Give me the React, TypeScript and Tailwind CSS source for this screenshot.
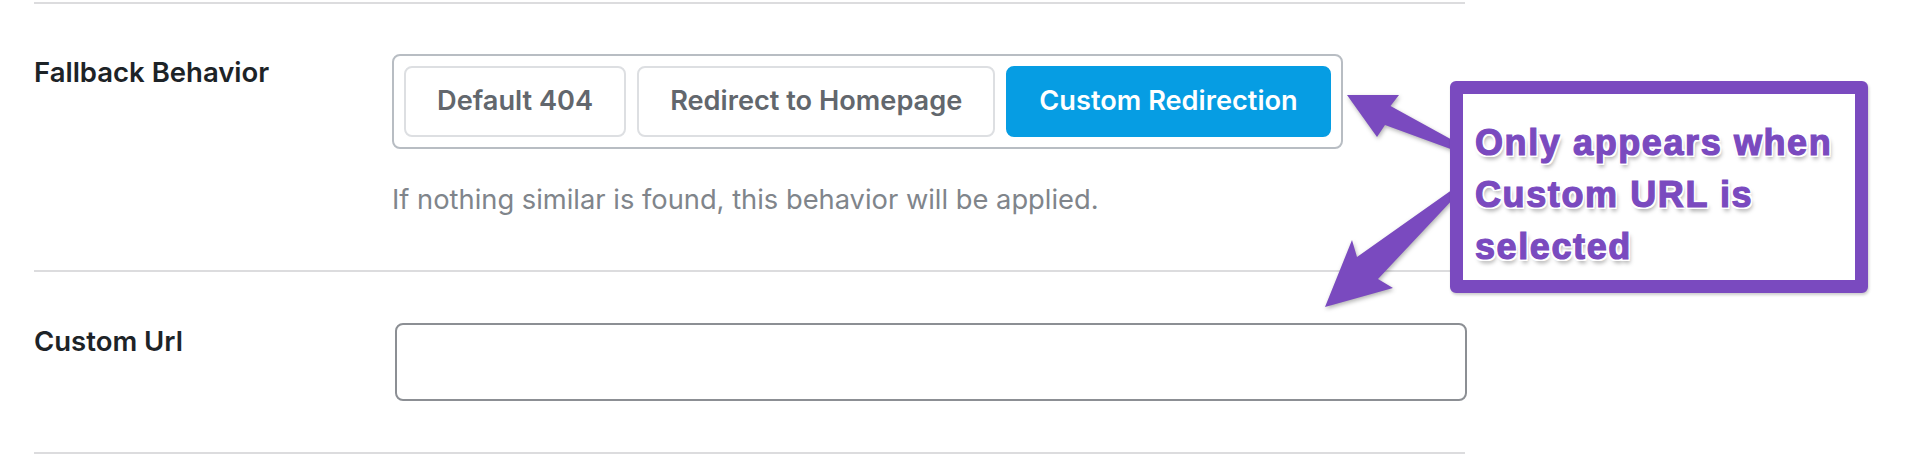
import { useState } from 'react';

const options = ['Default 404', 'Redirect to Homepage', 'Custom Redirection'];

export default function App() {
  const [selected, setSelected] = useState('Custom Redirection');
  const [customUrl, setCustomUrl] = useState('');

  return (
    <div className="relative h-[454px] w-[1910px] overflow-hidden bg-white font-['Inter',sans-serif]">
      <div className="ml-[34px] w-[1431px] pt-[2px]">
        <div className="border-t-2 border-[#dcdcde]" />

        {/* Fallback behavior */}
        <div className="flex border-b-2 border-[#dcdcde] pt-[50px] pb-[50px]">
          <div className="w-[358px] shrink-0 text-[27.5px] leading-[36px] font-semibold text-[#1d2327]">
            Fallback Behavior
          </div>
          <div>
            <div className="inline-flex gap-[11px] rounded-[8px] border-2 border-[#b8bdc3] p-[10px]">
              {options.map((opt) => (
                <button
                  key={opt}
                  onClick={() => setSelected(opt)}
                  className={
                    selected === opt
                      ? 'h-[71px] rounded-[8px] border-2 border-[#069de3] bg-[#069de3] px-[31px] text-[27.2px] font-semibold text-white'
                      : 'h-[71px] rounded-[8px] border-2 border-[#dddfe2] bg-white px-[31px] text-[27.2px] font-semibold text-[#62676d]'
                  }
                >
                  {opt}
                </button>
              ))}
            </div>
            <p className="mt-[31px] text-[27.3px] leading-[40px] text-[#80858b]">
              If nothing similar is found, this behavior will be applied.
            </p>
          </div>
        </div>

        {/* Custom url */}
        <div className="flex border-b-2 border-[#dcdcde] pt-[51px] pb-[51px]">
          <div className="w-[358px] shrink-0 text-[27.5px] leading-[36px] font-semibold text-[#1d2327]">
            Custom Url
          </div>
          <input
            type="text"
            value={customUrl}
            onChange={(e) => setCustomUrl(e.target.value)}
            className="ml-[3px] h-[78px] w-[1072px] shrink-0 rounded-[8px] border-2 border-[#8c8f94] px-4 text-[27px] outline-none"
          />
        </div>
      </div>

      {/* Annotation arrows */}
      <svg
        className="pointer-events-none absolute left-0 top-0 drop-shadow-[1px_2px_2px_rgba(0,0,0,0.3)]"
        width="1910"
        height="454"
        viewBox="0 0 1910 454"
      >
        <polygon
          fill="#7a4abf"
          points="1347,95 1399,95 1390.5,106 1456,142 1456,151 1385,125 1377,137"
        />
        <polygon
          fill="#7a4abf"
          points="1325,307 1352,240 1357,257 1456,187 1456,196 1378,279 1393,288"
        />
      </svg>

      {/* Annotation box */}
      <div className="absolute left-[1450px] top-[81px] h-[212px] w-[418px] rounded-[6px] border-[13px] border-[#7a4abf] bg-white pl-[12px] pt-[23px] shadow-[1px_2px_3px_rgba(0,0,0,0.2)]">
        <div className="font-['Liberation_Sans',Arial,sans-serif] text-[36px] leading-[52px] font-bold tracking-[1.6px] text-[#7a4abf] [-webkit-text-stroke:1.2px_#7a4abf] [text-shadow:2px_0_0_#fff,-2px_0_0_#fff,0_2px_0_#fff,0_-2px_0_#fff,2px_2px_0_#fff,-2px_-2px_0_#fff,2px_-2px_0_#fff,-2px_2px_0_#fff,2px_4px_4px_rgba(0,0,0,0.35)]">
          <div className="whitespace-nowrap">Only appears when</div>
          <div className="whitespace-nowrap">Custom URL is</div>
          <div className="whitespace-nowrap">selected</div>
        </div>
      </div>
    </div>
  );
}
